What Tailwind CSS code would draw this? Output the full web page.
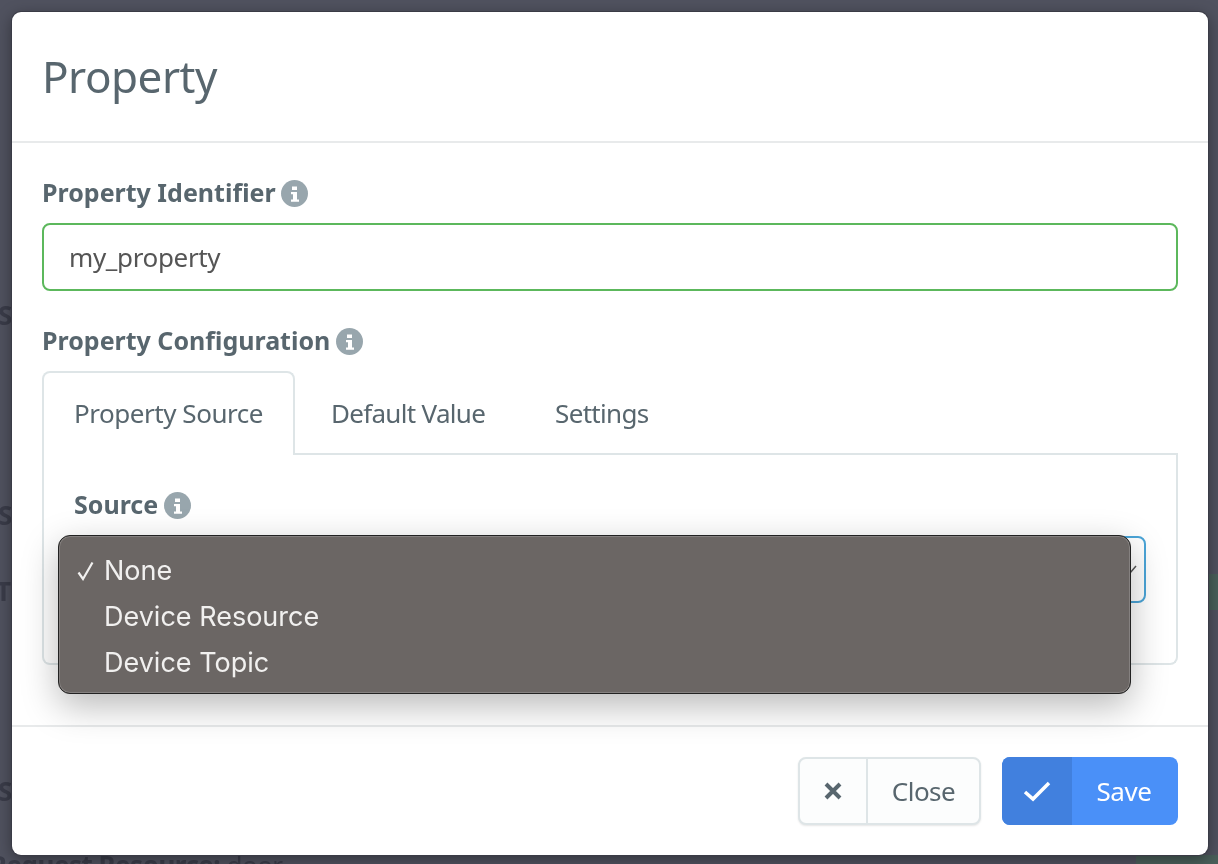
<!DOCTYPE html>
<html lang="en">
<head>
<meta charset="UTF-8">
<title>Property</title>
<script src="https://cdn.jsdelivr.net/npm/@tailwindcss/browser@4"></script>
</head>
<body class="relative w-[1218px] h-[864px] overflow-hidden bg-[#50525f] font-['Noto_Sans',sans-serif]">
  <!-- dimmed page behind the modal -->
  <div class="absolute inset-0 text-[#3a3c49] text-[26px] font-bold blur-[0.6px]">
    <span class="absolute left-[-2px] top-[296px]">S</span>
    <span class="absolute left-[-2px] top-[496px]">S</span>
    <span class="absolute left-[-4px] top-[572px]">T</span>
    <span class="absolute left-[-2px] top-[772px]">S</span>
    <span class="absolute left-[-10px] top-[846px] tracking-[-0.5px]">Request Resource: <span class="font-normal">door</span></span>
    <div class="absolute left-[1208px] top-[574px] w-[10px] h-[36px] bg-[#4a5f5a]"></div>
    <div class="absolute left-[1136px] top-[855px] w-[82px] h-[9px] bg-[#4a5f5a]"></div>
  </div>

  <div class="relative pl-3 pt-3">
    <div class="bg-white rounded-[9px] w-[1196px] h-[843px] flex flex-col shadow-[0_0_0_1px_#3a3b46,0_4px_16px_rgba(0,0,0,0.4)]">
      <div class="h-[131px] border-b-2 border-[#e8eaeb] px-[30px] flex items-center">
        <h1 class="text-[44px] leading-none text-[#58666e] tracking-[-0.5px] -mt-[2px]">Property</h1>
      </div>

      <div class="flex-1 px-[30px] pt-[35px]">
        <div class="flex items-center gap-[5px] h-[30px] text-[25px] font-bold text-[#58666e]">
          Property Identifier
          <svg class="w-[27px] h-[27px]" viewBox="0 0 27 27"><circle cx="13.5" cy="13.5" r="13.5" fill="#98a6ad"/><path d="M11 6.5h5v3.6h-5zM10 12h6v7.5h2v2.3h-8v-2.3h2v-5.2h-2z" fill="#fff"/></svg>
        </div>
        <div class="mt-[15px] h-[68px] border-2 border-[#5cb85c] rounded-[8px] px-[25px] flex items-center text-[26px] text-[#555] tracking-[-0.35px]">my_property</div>

        <div class="mt-[35px] flex items-center gap-[6px] h-[30px] text-[25px] font-bold text-[#58666e]">
          Property Configuration
          <svg class="w-[27px] h-[27px]" viewBox="0 0 27 27"><circle cx="13.5" cy="13.5" r="13.5" fill="#98a6ad"/><path d="M11 6.5h5v3.6h-5zM10 12h6v7.5h2v2.3h-8v-2.3h2v-5.2h-2z" fill="#fff"/></svg>
        </div>

        <div class="mt-[15px] flex h-[84px] text-[26px] text-[#58666e] tracking-[-0.7px]">
          <div class="w-[253px] h-[84px] border-2 border-b-0 border-[#dee5e7] rounded-t-[8px] bg-white flex items-center justify-center pb-[2px] tracking-[-0.45px]">Property Source</div>
          <div class="flex-1 flex items-center border-b-2 border-[#dee5e7] pt-[2px]">
            <span class="ml-[36px]">Default Value</span>
            <span class="ml-[70px]">Settings</span>
          </div>
        </div>
        <div class="h-[210px] border-2 border-t-0 border-[#dee5e7] rounded-b-[8px] px-[30px] pt-[35px]">
          <div class="flex items-center gap-[6px] h-[30px] text-[25px] font-bold text-[#58666e]">
            Source
            <svg class="w-[27px] h-[27px]" viewBox="0 0 27 27"><circle cx="13.5" cy="13.5" r="13.5" fill="#98a6ad"/><path d="M11 6.5h5v3.6h-5zM10 12h6v7.5h2v2.3h-8v-2.3h2v-5.2h-2z" fill="#fff"/></svg>
          </div>
          <div class="mt-[16px] h-[67px] border-2 border-[#4ba5d8] rounded-[8px] flex items-center justify-end pr-[6px]">
            <svg class="w-[12px] h-[12px]" viewBox="0 0 12 12"><path d="M1 9.5l3 -1M4 9l6 -7" stroke="#555" stroke-width="1.5" fill="none"/></svg>
          </div>
        </div>
      </div>

      <div class="h-[130px] border-t-2 border-[#e8eaeb] flex items-start justify-end gap-[21px] pt-[30px] pr-[30px]">
        <div class="flex h-[68px] w-[183px] rounded-[8px] border-2 border-[#dee5e7] bg-[#fcfdfd] shadow-[0_1px_2px_rgba(0,0,0,0.1)] text-[26px] text-[#58666e] tracking-[-0.5px]">
          <div class="w-[68px] border-r-2 border-[#dee5e7] flex items-center justify-center">
            <svg class="w-[20px] h-[20px]" viewBox="0 0 20 20"><path d="M3 3l14 14M17 3L3 17" stroke="#58666e" stroke-width="4" fill="none"/></svg>
          </div>
          <div class="flex-1 flex items-center justify-center">Close</div>
        </div>
        <div class="flex h-[68px] w-[176px] rounded-[8px] overflow-hidden bg-[#4a90f8] text-white text-[26px] tracking-[-0.4px]">
          <div class="w-[70px] bg-[#4180de] flex items-center justify-center">
            <svg class="w-[28px] h-[22px]" viewBox="0 0 28 22"><path d="M2 12l8 7L26 3" stroke="#fff" stroke-width="3.5" fill="none"/></svg>
          </div>
          <div class="flex-1 flex items-center justify-center pr-[2px]">Save</div>
        </div>
      </div>
    </div>
  </div>

  <!-- native select popup -->
  <div class="absolute left-[58px] top-[535px] w-[1073px] h-[159px] rounded-[12px] bg-[#6b6664] border border-[#222] shadow-[inset_0_0_0_1px_rgba(255,255,255,0.18),0_12px_36px_rgba(0,0,0,0.28)] pt-[12px] text-[27px] leading-[46px] text-[#f1f0ef] font-['Inter',sans-serif]">
    <div class="relative pl-[45px]">
      <svg class="absolute left-[18px] top-[13px] w-[17px] h-[20px]" viewBox="0 0 17 20"><path d="M1.5 11.5l4.5 6.5L15.5 1.5" stroke="#f1f0ef" stroke-width="2.2" fill="none"/></svg>
      None
    </div>
    <div class="pl-[45px]">Device Resource</div>
    <div class="pl-[45px]">Device Topic</div>
  </div>
</body>
</html>
